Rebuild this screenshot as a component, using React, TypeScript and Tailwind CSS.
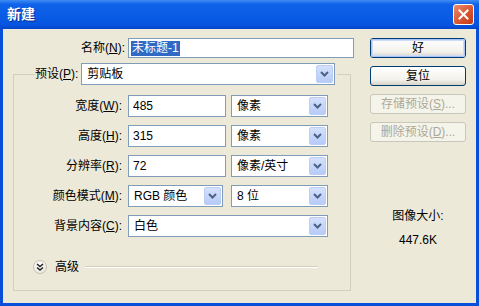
import type { ReactNode } from 'react';

const FONT = 'font-["Liberation_Sans","Noto_Sans_CJK_SC",sans-serif]';

function Arrow() {
  return (
    <span className="ml-auto mr-[1px] flex h-[18px] w-[17px] items-center justify-center rounded-[2px] border border-[#BCCEF7] bg-[linear-gradient(to_bottom,#D4E1FC,#B7CBF8)]">
      <svg width="9" height="6" viewBox="0 0 9 6">
        <polyline points="1,1 4.5,4.5 8,1" fill="none" stroke="#4D6185" strokeWidth="2" />
      </svg>
    </span>
  );
}

function Select({ value, w }: { value: string; w: string }) {
  return (
    <div className={`flex h-[22px] items-center border border-[#7F9DB9] bg-white ${w}`}>
      <span className="pl-[5px] text-[12px] text-black">{value}</span>
      <Arrow />
    </div>
  );
}

function Input({ value, w }: { value: ReactNode; w: string }) {
  return (
    <div className={`flex h-[22px] items-center border border-[#7F9DB9] bg-white pl-[4px] text-[12px] text-black ${w}`}>
      {value}
    </div>
  );
}

function Label({ text, k }: { text: string; k: string }) {
  return (
    <div className="w-[111px] pr-[3px] text-right text-[12px] text-black">
      {text}(<span className="underline">{k}</span>):
    </div>
  );
}

function Button({ children, primary, disabled }: { children: ReactNode; primary?: boolean; disabled?: boolean }) {
  if (disabled) {
    return (
      <div className="flex h-[20px] w-[96px] items-center justify-center rounded-[3px] border border-[#C9C7BA] bg-[#F5F4EA] text-[12px] text-[#ACA899]">
        {children}
      </div>
    );
  }
  return (
    <div className="h-[20px] w-[96px] rounded-[3px] border border-[#003C74] bg-[linear-gradient(to_bottom,#FFFFFF,#F3F2EC_70%,#D8D4C8)]">
      <div
        className={`flex h-full w-full items-center justify-center rounded-[2px] text-[12px] text-black ${
          primary ? 'shadow-[inset_0_0_0_1px_#A8C4F5,inset_0_0_0_2px_#CEDCF8]' : ''
        }`}
      >
        {children}
      </div>
    </div>
  );
}

export default function App() {
  return (
    <div className={`flex h-[306px] w-[479px] flex-col bg-[#0A4FD9] ${FONT}`}>
      {/* title bar */}
      <div className="flex h-[29px] items-center bg-[linear-gradient(to_bottom,#3F8CF3_0%,#0F62EA_15%,#0A5CE6_55%,#0654DF_85%,#0445C9_100%)] pl-[7px] pr-[5px]">
        <span className="text-[14px] font-bold text-white [text-shadow:1px_1px_0_#0A2A8A]">新建</span>
        <div className="ml-auto flex h-[21px] w-[21px] items-center justify-center rounded-[3px] border border-white bg-[linear-gradient(135deg,#EB8D6E,#D6522C_60%,#BF3B18)]">
          <svg width="11" height="11" viewBox="0 0 11 11">
            <path d="M1.5 1.5 L9.5 9.5 M9.5 1.5 L1.5 9.5" stroke="white" strokeWidth="2" strokeLinecap="square" />
          </svg>
        </div>
      </div>

      {/* body */}
      <div className="mx-[3px] mb-[3px] flex flex-1 bg-[#ECE9D8] pt-[9px]">
        {/* left column */}
        <div className="flex w-[351px] flex-col">
          <div className="flex items-center">
            <div className="w-[122px] text-right text-[12px] text-black">
              名称(<span className="underline">N</span>):
            </div>
            <div className="ml-[3px] flex h-[20px] w-[226px] items-center border border-[#7F9DB9] bg-white pl-[2px] text-[12px]">
              <span className="bg-[#316AC5] px-[1px] leading-[15px] text-white">未标题-1</span>
            </div>
          </div>

          <fieldset className="mt-[5px] ml-[10px] w-[338px] border border-[#D0D0BF] pb-[16px]">
            <legend className="ml-[21px] flex items-center pr-[2px]">
              <span className="text-[12px] text-black">
                预设(<span className="underline">P</span>):
              </span>
              <Select value="剪贴板" w="ml-[3px] w-[254px]" />
            </legend>

            <div className="flex flex-col gap-[8px] pt-[10px]">
              <div className="flex items-center">
                <Label text="宽度" k="W" />
                <Input value="485" w="ml-[3px] w-[98px]" />
                <Select value="像素" w="ml-[5px] w-[97px]" />
              </div>
              <div className="flex items-center">
                <Label text="高度" k="H" />
                <Input value="315" w="ml-[3px] w-[98px]" />
                <Select value="像素" w="ml-[5px] w-[97px]" />
              </div>
              <div className="flex items-center">
                <Label text="分辨率" k="R" />
                <Input value="72" w="ml-[3px] w-[98px]" />
                <Select value="像素/英寸" w="ml-[5px] w-[97px]" />
              </div>
              <div className="flex items-center">
                <Label text="颜色模式" k="M" />
                <Select value="RGB 颜色" w="ml-[3px] w-[95px]" />
                <Select value="8 位" w="ml-[8px] w-[97px]" />
              </div>
              <div className="flex items-center">
                <Label text="背景内容" k="C" />
                <Select value="白色" w="ml-[3px] w-[200px]" />
              </div>
            </div>

            <div className="mt-[22px] flex h-[15px] items-center pl-[19px]">
              <span className="flex h-[14px] w-[14px] items-center justify-center rounded-full border border-[#C5C2B2] bg-[radial-gradient(circle_at_40%_35%,#FFFFFF,#E4E1D4)]">
                <svg width="8" height="8" viewBox="0 0 8 8">
                  <polyline points="1,1 4,3.5 7,1" fill="none" stroke="#222" strokeWidth="1.5" />
                  <polyline points="1,4.5 4,7 7,4.5" fill="none" stroke="#222" strokeWidth="1.5" />
                </svg>
              </span>
              <span className="ml-[8px] text-[12px] text-black">高级</span>
              <div className="ml-[6px] h-[2px] w-[233px] border-t border-[#D0D0BF] border-b border-b-white" />
            </div>
          </fieldset>
        </div>

        {/* right column */}
        <div className="ml-[16px] flex w-[96px] flex-col">
          <div className="flex flex-col gap-[8px]">
            <Button primary>好</Button>
            <Button>复位</Button>
            <Button disabled>
              存储预设(<span className="underline">S</span>)...
            </Button>
            <Button disabled>
              删除预设(<span className="underline">D</span>)...
            </Button>
          </div>
          <div className="mt-[67px] text-center text-[12px] leading-[14px] text-black">图像大小:</div>
          <div className="mt-[10px] text-center text-[12px] leading-[14px] text-black">447.6K</div>
        </div>
      </div>
    </div>
  );
}
